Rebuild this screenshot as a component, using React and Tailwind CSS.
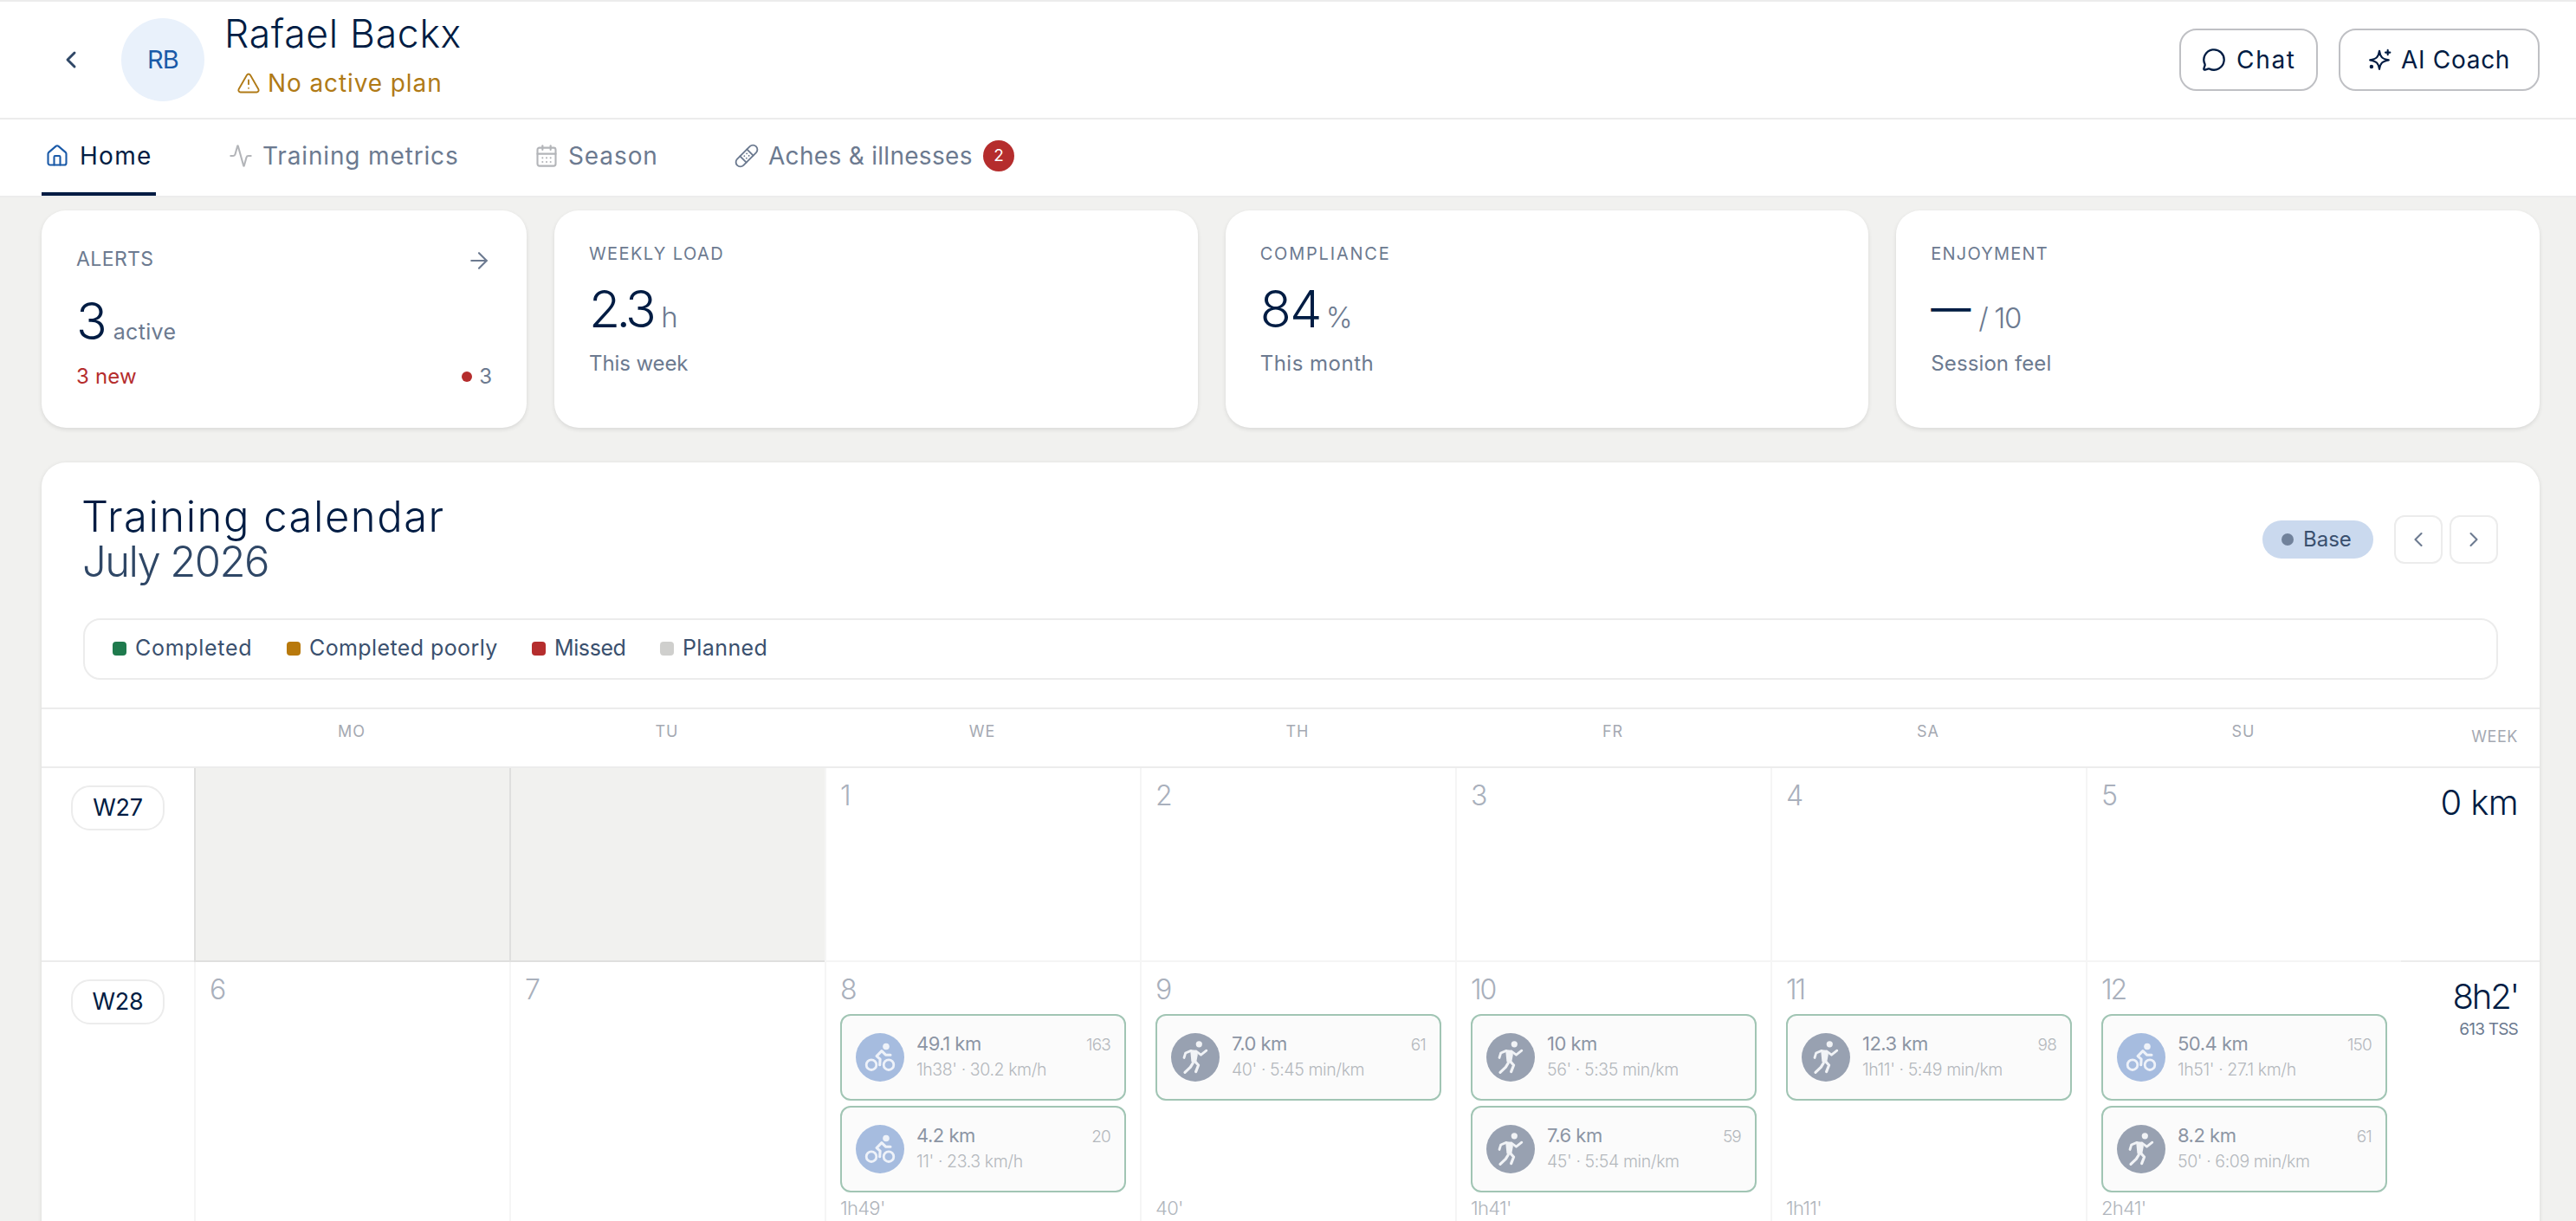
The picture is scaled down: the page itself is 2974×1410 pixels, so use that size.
import {
  Activity,
  ArrowRight,
  CalendarDays,
  ChevronLeft,
  ChevronRight,
  House,
  MessageCircle,
  TriangleAlert,
} from "lucide-react";

const stats = [
  { label: "WEEKLY LOAD", labelClass: "tracking-[1.4px]", value: "2.3", valueClass: "text-[59px] tracking-[-4.6px]", unit: "h", unitClass: "ml-2.5", note: "This week", noteClass: "tracking-[-0.1px]" },
  { label: "COMPLIANCE", labelClass: "tracking-[1.8px]", value: "84", valueClass: "text-[59px] tracking-[-1.6px]", unit: "%", unitClass: "ml-1.5 text-[28px] tracking-[-2px]", note: "This month", noteClass: "tracking-[0.5px]" },
  { label: "ENJOYMENT", labelClass: "tracking-[1.2px]", value: "—", valueClass: "w-[46px] text-[46px] font-normal -translate-y-0.5", unit: "/ 10", unitClass: "ml-[9px] translate-y-[5px] tracking-[-1.4px]", note: "Session feel", noteClass: "tracking-[0.1px]" },
];

const legend = [
  { label: "Completed", dot: "bg-[#1f7a4d]", text: "tracking-[0.7px] w-[175px]" },
  { label: "Completed poorly", dot: "bg-[#b8790c]", text: "tracking-[0.4px] w-[257px]" },
  { label: "Missed", dot: "bg-[#b52d2d]", text: "tracking-[-0.4px] w-[122px]" },
  { label: "Planned", dot: "bg-[#cfcfcd]", text: "tracking-[0.4px]" },
];

const days = ["MO", "TU", "WE", "TH", "FR", "SA", "SU"];

const weeks = [
  {
    id: "W27",
    total: "0 km",
    totalClass: "tracking-[-0.6px]",
    height: "h-[224px]",
    days: [
      { out: true },
      { out: true },
      { day: 1 },
      { day: 2 },
      { day: 3 },
      { day: 4 },
      { day: 5 },
    ],
  },
  {
    id: "W28",
    total: "8h2'",
    totalClass: "tracking-[-2.2px]",
    tss: "613 TSS",
    height: "h-[320px]",
    days: [
      { day: 6 },
      { day: 7 },
      {
        day: 8,
        total: "1h49'",
        sessions: [
          { sport: "bike", distance: "49.1 km", detail: "1h38' · 30.2 km/h", tss: 163 },
          { sport: "bike", distance: "4.2 km", detail: "11' · 23.3 km/h", tss: 20 },
        ],
      },
      {
        day: 9,
        total: "40'",
        sessions: [{ sport: "run", distance: "7.0 km", detail: "40' · 5:45 min/km", tss: 61 }],
      },
      {
        day: 10,
        total: "1h41'",
        sessions: [
          { sport: "run", distance: "10 km", detail: "56' · 5:35 min/km" },
          { sport: "run", distance: "7.6 km", detail: "45' · 5:54 min/km", tss: 59 },
        ],
      },
      {
        day: 11,
        total: "1h11'",
        sessions: [{ sport: "run", distance: "12.3 km", detail: "1h11' · 5:49 min/km", tss: 98 }],
      },
      {
        day: 12,
        total: "2h41'",
        sessions: [
          { sport: "bike", distance: "50.4 km", detail: "1h51' · 27.1 km/h", tss: 150 },
          { sport: "run", distance: "8.2 km", detail: "50' · 6:09 min/km", tss: 61 },
        ],
      },
    ],
  },
];

const BandageIcon = () => (
  <svg viewBox="0 0 24 24" className="size-7" fill="none" stroke="currentColor" strokeWidth="1.6" strokeLinecap="round">
    <g transform="rotate(-45 12 12)">
      <rect x="-1.2" y="7.6" width="26.4" height="8.8" rx="4.4" />
      <path d="M7.2 7.6v8.8M16.8 7.6v8.8" />
      <path d="M10.3 10.5h.01M13.7 10.5h.01M10.3 13.5h.01M13.7 13.5h.01" />
    </g>
  </svg>
);

const SparklesIcon = () => (
  <svg viewBox="0 0 24 24" className="size-7" fill="none" stroke="currentColor" strokeWidth="1.8" strokeLinecap="round" strokeLinejoin="round">
    <path d="M12 3.2c.9 6 2.8 7.9 9.3 9.1-6.5 1.2-8.4 3.1-9.3 9.1-.9-6-2.8-7.9-9.3-9.1 6.5-1.2 8.4-3.1 9.3-9.1z" />
    <path d="M20.3 2.5v4.6M18 4.8h4.6" />
    <circle cx="4.2" cy="18.8" r="1" fill="currentColor" />
  </svg>
);

const BikeIcon = () => (
  <svg viewBox="0 0 56 56" className="size-14 text-[#eef2f9]" fill="none" stroke="currentColor" strokeWidth="2.8" strokeLinecap="round" strokeLinejoin="round">
    <circle cx="18" cy="36.7" r="5.8" />
    <circle cx="38" cy="36.7" r="5.8" />
    <circle cx="35" cy="15.5" r="3.8" fill="currentColor" stroke="none" />
    <path d="M40 25.2h-5.5l-4.6-4.6-5.8 6 4 3.6-.4 6.6" strokeWidth="3.1" />
  </svg>
);

const RunIcon = () => (
  <svg viewBox="0 0 56 56" className="size-14 text-[#f1f3f6]" fill="none" stroke="currentColor" strokeWidth="2.8" strokeLinecap="round" strokeLinejoin="round">
    <circle cx="32.3" cy="12.8" r="3.6" fill="currentColor" stroke="none" />
    <path d="M15 28.5l1.7-5.5 6.3-2.6" />
    <path d="M29 21l5.5 4.2 6.3-5" />
    <path d="M23.2 20.2l5.8.6.8 4.2-1.4 7.2-4 .4z" fill="currentColor" strokeWidth="2" />
    <path d="M25.3 34.5l-3 4.8-6.3 6" strokeWidth="3.2" />
    <path d="M27 32.2l4.6 4.8-3 7.6" strokeWidth="3.2" />
  </svg>
);

const SessionCard = ({ session }) => (
  <div className="flex h-[100px] rounded-xl border-2 border-[#a1c5b4] bg-[#fbfbfb] pt-5 pr-4 pl-4">
    <div
      className={`size-14 shrink-0 rounded-full ${
        session.sport === "bike" ? "bg-[#a6bcdf]" : "bg-[#98a1b1]"
      }`}
    >
      {session.sport === "bike" ? <BikeIcon /> : <RunIcon />}
    </div>
    <div className="ml-[14px] flex-1 whitespace-nowrap">
      <div className="flex h-6 items-baseline justify-between leading-6">
        <span className="text-[22px] tracking-[-0.5px] text-[#8c95a4]">{session.distance}</span>
        <span className="text-[19px] font-light tracking-[-0.8px] text-[#b4b8bd]">{session.tss}</span>
      </div>
      <div className="mt-1.5 text-[19.5px] leading-6 font-light tracking-[-0.4px] text-[#b4b8bd]">{session.detail}</div>
    </div>
  </div>
);

const DayCell = ({ cell }) => {
  if (cell.out) {
    return <div className="border-b-2 border-l-2 border-[#dfdfde] bg-[#f1f1ef]" />;
  }
  return (
    <div className="border-b-2 border-l-2 border-[#f5f5f5] pt-4 pr-4 pl-4">
      <div className="text-[32px] leading-8 font-light tracking-[-2px] text-[#a9b0bc]">{cell.day}</div>
      {cell.sessions && (
        <>
          <div className="mt-3 flex min-h-[206px] flex-col gap-1.5">
            {cell.sessions.map((s) => (
              <SessionCard key={s.distance} session={s} />
            ))}
          </div>
          <div className="mt-1.5 text-[22px] leading-6 font-light tracking-[-0.7px] text-[#b0b5bc]">{cell.total}</div>
        </>
      )}
    </div>
  );
};

const App = () => {
  return (
    <div className="h-[1410px] w-[2974px] overflow-hidden bg-[#f1f1ef] font-['Inter',sans-serif] text-[#001c43]">
      <header className="flex h-[138px] items-center border-y-2 border-[#ececec] bg-white pr-[42px] pl-[66px]">
        <ChevronLeft className="size-8 text-[#2f4766]" strokeWidth={2.2} />
        <div className="ml-[42px] flex size-24 items-center justify-center rounded-full bg-[#e9f1fb] text-[29px] tracking-[-0.8px] text-[#1a5aa8]">
          RB
        </div>
        <div className="ml-[23px] pb-[8px]">
          <h1 className="text-[44.5px] leading-[44px] font-light tracking-[0.7px]">Rafael Backx</h1>
          <div className="mt-[17px] flex items-center pl-[14px] leading-9 text-[#b07a16]">
            <TriangleAlert className="size-7" strokeWidth={1.6} />
            <span className="ml-2 text-[28px] tracking-[0.9px]">No active plan</span>
          </div>
        </div>
        <div className="ml-auto flex gap-6 text-[28px]">
          <button className="flex h-[72px] w-40 items-center rounded-[20px] border-2 border-[#bfc0c4] pl-6">
            <MessageCircle className="size-7" strokeWidth={2} />
            <span className="ml-3 tracking-[1.7px]">Chat</span>
          </button>
          <button className="flex h-[72px] w-[232px] items-center rounded-[20px] border-2 border-[#bfc0c4] pl-[31px]">
            <SparklesIcon />
            <span className="ml-[11px] tracking-[0.7px]">AI Coach</span>
          </button>
        </div>
      </header>

      <nav className="flex h-[90px] border-b-2 border-[#ececec] bg-white pl-12 text-[28px] text-[#6c7a90]">
        <a className="flex w-[132px] items-center border-b-4 border-[#001c43] pl-1 text-[#001c43]">
          <House className="size-7 text-[#1a5aa8]" strokeWidth={1.8} />
          <span className="ml-3 tracking-[1.3px]">Home</span>
        </a>
        <a className="ml-[84px] flex w-[269px] items-center border-b-4 border-transparent whitespace-nowrap">
          <Activity className="size-7 text-[#b3b5b9]" strokeWidth={1.8} />
          <span className="ml-[11px] tracking-[0.85px]">Training metrics</span>
        </a>
        <a className="ml-[84px] flex w-[146px] items-center border-b-4 border-transparent">
          <CalendarDays className="size-7 text-[#b3b5b9]" strokeWidth={1.8} />
          <span className="ml-[11px] tracking-[0.9px]">Season</span>
        </a>
        <a className="ml-[85px] flex items-center border-b-4 border-transparent whitespace-nowrap">
          <BandageIcon />
          <span className="ml-[11px] w-[248px] tracking-[0.3px]">Aches &amp; illnesses</span>
          <span className="flex size-9 items-center justify-center rounded-full bg-[#b52d2d] text-[19px] text-white">
            2
          </span>
        </a>
      </nav>

      <main className="pt-[15px] pr-[42px] pl-12">
        <section className="flex h-[251px] gap-8">
          <div className="w-[560px] rounded-[28px] bg-white px-10 pt-10 shadow-[0_2px_5px_rgba(0,0,0,0.1)]">
            <div className="flex h-8 items-center justify-between leading-8 text-[#6c7a90]">
              <span className="text-[23px] tracking-[0.4px]">ALERTS</span>
              <ArrowRight className="mt-1 size-[30px]" strokeWidth={1.7} />
            </div>
            <div className="mt-[26px] flex h-[60px] items-baseline leading-[60px]">
              <span className="text-[59px] font-light">3</span>
              <span className="ml-[7px] text-[25px] tracking-[0.3px] text-[#6c7a90]">active</span>
            </div>
            <div className="mt-[18px] flex items-center justify-between text-[24px] leading-8">
              <span className="tracking-[0.2px] text-[#b52d2d]">3 new</span>
              <span className="flex items-center gap-2 text-[#6c7a90]">
                <span className="size-3 rounded-full bg-[#b52d2d]" />
                3
              </span>
            </div>
          </div>
          {stats.map((s) => (
            <div
              key={s.label}
              className="flex-1 rounded-[28px] bg-white px-10 pt-9 shadow-[0_2px_5px_rgba(0,0,0,0.1)]"
            >
              <div className={`text-[20px] leading-[29px] text-[#6c7a90] ${s.labelClass}`}>{s.label}</div>
              <div className="mt-[19px] flex h-[60px] items-baseline leading-[60px] font-light">
                <span className={s.valueClass}>{s.value}</span>
                <span className={`text-[33px] text-[#6c7a90] ${s.unitClass}`}>{s.unit}</span>
              </div>
              <div className={`mt-[17px] text-[24px] leading-8 text-[#6c7a90] ${s.noteClass}`}>{s.note}</div>
            </div>
          ))}
        </section>

        <section className="mt-10 rounded-t-[28px] bg-white pt-[37px] shadow-[0_1px_5px_rgba(0,0,0,0.1)]">
          <div className="flex items-center justify-between px-12">
            <div className="text-[49px] leading-[52px] font-light">
              <h2 className="-ml-[2px] tracking-[1.5px]">Training calendar</h2>
              <p className="-ml-px tracking-[-1.6px] text-[#2f4766]">July 2026</p>
            </div>
            <div className="flex items-center">
              <span className="mr-6 flex h-11 w-32 items-center rounded-full bg-[#cad9ee] pl-[22px] text-[24px] text-[#3a506e]">
                <span className="mr-[11px] size-3.5 rounded-full bg-[#71829b]" />
                Base
              </span>
              <button className="mr-2 flex size-14 items-center justify-center rounded-xl border-2 border-[#ececec] text-[#6c7a90]">
                <ChevronLeft className="size-7" strokeWidth={1.8} />
              </button>
              <button className="flex size-14 items-center justify-center rounded-xl border-2 border-[#ececec] text-[#6c7a90]">
                <ChevronRight className="size-7" strokeWidth={1.8} />
              </button>
            </div>
          </div>

          <div className="mx-12 mt-[39px] flex h-[71px] items-center rounded-[20px] border-2 border-[#ececec] pb-px pl-8 text-[25px] text-[#3a506e]">
            {legend.map((l) => (
              <div key={l.label} className="flex items-center whitespace-nowrap">
                <span className={`mr-[10px] size-4 rounded-[4px] ${l.dot}`} />
                <span className={l.text}>{l.label}</span>
              </div>
            ))}
          </div>

          <div className="mt-8 grid h-[70px] grid-cols-[176px_repeat(7,364px)_160px] border-y-2 border-[#ececec] text-[18px] leading-6 text-[#a5a9b2]">
            <div />
            {days.map((d) => (
              <div key={d} className="pt-[14px] text-center tracking-[1px]">
                {d}
              </div>
            ))}
            <div className="pt-5 pr-[25px] text-right tracking-[0.6px]">WEEK</div>
          </div>

          {weeks.map((w) => (
            <div key={w.id} className={`grid grid-cols-[176px_repeat(7,364px)_160px] ${w.height}`}>
              <div className="flex justify-center border-b-2 border-[#ececec] pt-5">
                <span className="flex h-[52px] w-[108px] items-center justify-center rounded-[22px] border-2 border-[#ececec] text-[27px] tracking-[-0.3px]">
                  {w.id}
                </span>
              </div>
              {w.days.map((c, i) => (
                <DayCell key={i} cell={c} />
              ))}
              <div className="border-b-2 border-[#ececec] pt-5 pr-[25px] text-right">
                <div className={`text-[40px] leading-10 font-light ${w.totalClass}`}>{w.total}</div>
                {w.tss && <div className="mt-1 text-[19px] leading-7 tracking-[-0.8px] text-[#6c7a90]">{w.tss}</div>}
              </div>
            </div>
          ))}
        </section>
      </main>
    </div>
  );
};

export default App;
